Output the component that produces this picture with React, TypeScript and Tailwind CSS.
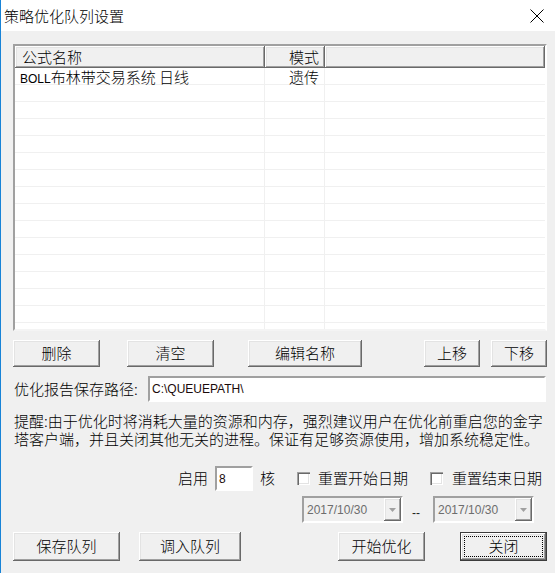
import React from 'react';

const raised =
  'shadow-[inset_-1px_-1px_0_#696969,inset_1px_1px_0_#ffffff,inset_-2px_-2px_0_#a0a0a0,inset_2px_2px_0_#e3e3e3]';
const sunkenBox =
  'shadow-[inset_1px_1px_0_#a0a0a0,inset_2px_2px_0_#696969,inset_-1px_-1px_0_#ffffff,inset_-2px_-2px_0_#e3e3e3]';
const latin = "font-['Liberation_Sans',sans-serif]";

interface BtnProps {
  label: string;
  className: string;
}

const Btn: React.FC<BtnProps> = ({ label, className }) => (
  <div className={`flex items-center justify-center bg-[#f0f0f0] text-[15px] text-black ${raised} ${className}`}>
    {label}
  </div>
);

const DatePicker: React.FC<{ className?: string }> = ({ className = '' }) => (
  <div
    className={`flex h-[27px] w-[101px] border-2 border-t-[#a0a0a0] border-l-[#a0a0a0] border-r-white border-b-white bg-[#f0f0f0] ${className}`}
  >
    <div className={`flex flex-1 items-center pl-[3px] text-[12px] text-[#6d6d6d] ${latin}`}>2017/10/30</div>
    <div className={`flex w-[17px] items-center justify-center ${raised}`}>
      <svg width="7" height="4" viewBox="0 0 7 4">
        <path d="M0 0 H7 L3.5 4 Z" fill="#a0a0a0" />
      </svg>
    </div>
  </div>
);

const rows = Array.from({ length: 16 }, (_, i) => i);

export default function App() {
  return (
    <div className="flex h-[573px] w-[555px] flex-col overflow-hidden border-l border-[#1883d7] bg-[#f0f0f0] font-['Noto_Sans_CJK_SC','Liberation_Sans',sans-serif] font-light text-black">
      {/* title bar */}
      <div className="flex h-[31px] items-center justify-between bg-white pl-[3px] pr-[11px]">
        <span className="text-[15px] leading-none">策略优化队列设置</span>
        <svg width="14" height="14" viewBox="0 0 14 14">
          <path d="M0.5 0.5 L13.5 13.5 M13.5 0.5 L0.5 13.5" stroke="#000" strokeWidth="1" />
        </svg>
      </div>

      <div className="flex flex-col pl-[12px]">
        {/* list */}
        <div className="mt-[13px] flex h-[287px] w-[534px] flex-col overflow-hidden border-2 border-t-[#a0a0a0] border-l-[#a0a0a0] border-r-white border-b-[#f4f4f4] bg-white">
          <div className="flex h-[22px] shrink-0 bg-[#f0f0f0] text-[15px]">
            <div className={`flex w-[250px] items-center pl-[7px] ${raised}`}>公式名称</div>
            <div className={`flex w-[60px] items-center justify-end pr-[6px] ${raised}`}>模式</div>
            <div className={`flex-1 ${raised}`} />
          </div>
          {rows.map((i) => (
            <div key={i} className="flex h-[17px] shrink-0 border-b border-[#f0f0f0]">
              <div className="w-[250px] border-r border-[#f0f0f0] pl-[5px] text-[15px] leading-[17px]">
                {i === 0 && (
                  <span>
                    <span className={`text-[12px] font-normal ${latin}`}>BOLL</span>布林带交易系统 日线
                  </span>
                )}
              </div>
              <div className="flex w-[60px] items-center justify-end border-r border-[#f0f0f0] pr-[5px] text-[15px] leading-[17px]">
                {i === 0 ? '遗传' : ''}
              </div>
              <div className="flex-1" />
            </div>
          ))}
        </div>

        {/* action buttons */}
        <div className="mt-[9px] flex h-[27px]">
          <Btn label="删除" className="w-[87px]" />
          <Btn label="清空" className="ml-[27px] w-[87px]" />
          <Btn label="编辑名称" className="ml-[34px] w-[114px]" />
          <Btn label="上移" className="ml-[62px] w-[56px]" />
          <Btn label="下移" className="ml-[11px] w-[56px]" />
        </div>

        {/* path */}
        <div className="mt-[9px] flex h-[26px] items-center">
          <span className="ml-[1px] w-[134px] text-[15px]">优化报告保存路径:</span>
          <div
            className={`flex h-full w-[398px] items-center border-2 border-t-[#a0a0a0] border-l-[#a0a0a0] border-r-white border-b-white bg-white pl-[2px] text-[12px] font-normal text-[#1a0a0a] ${latin}`}
          >
            C:\QUEUEPATH\
          </div>
        </div>

        {/* notice */}
        <p className="mt-[10px] ml-[1px] whitespace-nowrap text-[15px] leading-[18px]">
          提醒:由于优化时将消耗大量的资源和内存，强烈建议用户在优化前重启您的金字
          <br />
          塔客户端，并且关闭其他无关的进程。保证有足够资源使用，增加系统稳定性。
        </p>

        {/* cores + reset options */}
        <div className="mt-[18px] flex h-[25px] items-center text-[15px]">
          <span className="ml-[165px]">启用</span>
          <div
            className={`ml-[7px] flex h-[25px] w-[38px] items-center border-2 border-t-[#a0a0a0] border-l-[#a0a0a0] border-r-white border-b-white bg-white pl-[2px] text-[12px] font-normal text-[#1a0a0a] ${latin}`}
          >
            8
          </div>
          <span className="ml-[7px]">核</span>
          <div className={`ml-[22px] h-[13px] w-[13px] bg-white ${sunkenBox}`} />
          <span className="ml-[8px]">重置开始日期</span>
          <div className={`ml-[22px] h-[13px] w-[13px] bg-white ${sunkenBox}`} />
          <span className="ml-[9px]">重置结束日期</span>
        </div>

        {/* dates */}
        <div className="mt-[5px] flex h-[27px] items-center font-normal">
          <DatePicker className="ml-[289px]" />
          <span className={`ml-[9px] mt-[6px] w-[12px] text-[12px] text-[#222] ${latin}`}>--</span>
          <DatePicker className="ml-[9px]" />
        </div>

        {/* bottom buttons */}
        <div className="mt-[9px] flex h-[29px]">
          <Btn label="保存队列" className="w-[107px]" />
          <Btn label="调入队列" className="ml-[19px] w-[102px]" />
          <Btn label="开始优化" className="ml-[97px] w-[87px]" />
          <div className="ml-[35px] flex w-[87px] border border-[#3c3c3c]">
            <div className={`flex flex-1 bg-[#f0f0f0] p-[3px] ${raised}`}>
              <div className="flex flex-1 items-center justify-center border border-dotted border-black text-[15px]">
                关闭
              </div>
            </div>
          </div>
        </div>
      </div>
    </div>
  );
}
